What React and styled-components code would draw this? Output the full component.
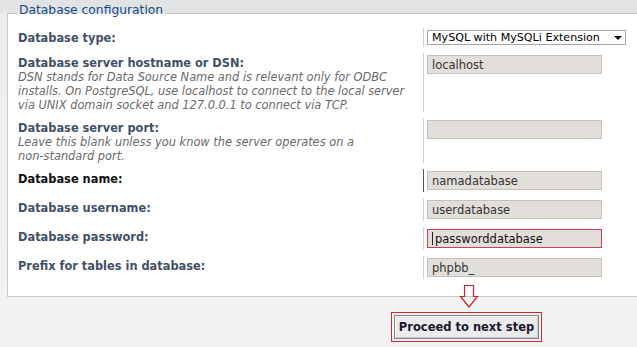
import React from "react";
import styled, { createGlobalStyle } from "styled-components";

const Global = createGlobalStyle`
  html, body { margin: 0; padding: 0; }
  body {
    font-family: "DejaVu Sans", Verdana, sans-serif;
    overflow: hidden;
    background: #f1f1f1;
  }
`;

const Page = styled.div`
  position: relative;
  width: 637px;
  height: 347px;
  overflow: hidden;
  padding: 3px 0 0 7px;
  box-sizing: border-box;
  background: linear-gradient(
    to bottom,
    #e1e3e5 0,
    #e1e3e5 13px,
    #ededed 13px,
    #f2f2f2 100%
  );
`;

const Fieldset = styled.fieldset`
  margin: 0;
  width: 690px;
  min-width: 0;
  padding: 5px 10px 17px 10px;
  border: 1px solid #c8c8c8;
  background: #ffffff;
`;

const Legend = styled.legend`
  padding: 0 2px 6px 1px;
  font-size: 12.3px;
  line-height: 14px;
  color: #144a88;
`;

const Rows = styled.div`
  display: flex;
  flex-direction: column;
  gap: 6px;
`;

const Row = styled.div`
  display: grid;
  grid-template-columns: 405px 1fr;
`;

const Term = styled.div`
  padding-top: 3px;
`;

const Label = styled.div`
  font-size: 11.4px;
  line-height: 14px;
  font-weight: bold;
  color: ${(p) => (p.$dark ? "#111111" : "#425067")};
`;

const Explain = styled.div`
  font-size: 11.4px;
  line-height: 14px;
  font-style: italic;
  color: #6a6a6a;
`;

const Field = styled.div`
  border-left: 1px solid ${(p) => (p.$dark ? "#555555" : "#cfcfcf")};
  padding: 2px 0 2px 3px;
`;

const TextInput = styled.input`
  display: block;
  box-sizing: border-box;
  width: 175px;
  height: 19px;
  margin: 0;
  padding: 0 4px 0 4px;
  border: 1px solid #c4c0ba;
  background: #e2dfda;
  font-family: "DejaVu Sans", Verdana, sans-serif;
  font-size: 11.5px;
  color: #333333;
  outline: none;
`;

const FocusBox = styled.div`
  position: relative;
  box-sizing: border-box;
  width: 175px;
  height: 19px;
  border: 1px solid #c8405f;
  background: #e2dfda;
  &::after {
    content: "";
    position: absolute;
    left: 4px;
    top: 2px;
    width: 1px;
    height: 13px;
    background: #222222;
  }
`;

const PasswordInput = styled.input`
  display: block;
  box-sizing: border-box;
  width: 100%;
  height: 17px;
  margin: 0;
  padding: 0 4px 0 7px;
  border: none;
  background: transparent;
  font-family: "DejaVu Sans", Verdana, sans-serif;
  font-size: 11.5px;
  color: #111111;
  outline: none;
`;

const SelectWrap = styled.div`
  position: relative;
  width: 199px;
  &::after {
    content: "";
    position: absolute;
    right: 4px;
    top: 6px;
    border-left: 4px solid transparent;
    border-right: 4px solid transparent;
    border-top: 4px solid #111111;
  }
`;

const Select = styled.select`
  display: block;
  appearance: none;
  -webkit-appearance: none;
  box-sizing: border-box;
  width: 199px;
  height: 15px;
  margin: 0;
  padding: 0 14px 0 4px;
  border: 1px solid #a7a7a7;
  border-radius: 0;
  background: #ffffff;
  font-family: "DejaVu Sans", Verdana, sans-serif;
  font-size: 11.1px;
  line-height: 13px;
  color: #000000;
  outline: none;
`;

const SubmitRow = styled.div`
  display: flex;
  padding: 15px 0 0 384px;
`;

const Highlight = styled.div`
  border: 1px solid #d02a32;
  padding: 2px;
`;

const Button = styled.button`
  display: block;
  box-sizing: border-box;
  width: 145px;
  height: 24px;
  margin: 0;
  padding: 0;
  border: 1px solid #858585;
  background: #ebebeb;
  box-shadow: inset 1px 1px 0 #ffffff, inset -1px -1px 0 #c9c9c9;
  font-family: "DejaVu Sans", Verdana, sans-serif;
  font-size: 11.5px;
  font-weight: bold;
  color: #1c1530;
`;

const Arrow = styled.svg`
  position: absolute;
  left: 459px;
  top: 284px;
`;

const explanations = {
  dsn: [
    "DSN stands for Data Source Name and is relevant only for ODBC",
    "installs. On PostgreSQL, use localhost to connect to the local server",
    "via UNIX domain socket and 127.0.0.1 to connect via TCP.",
  ],
  port: [
    "Leave this blank unless you know the server operates on a",
    "non-standard port.",
  ],
};

const fields = [
  { label: "Database server hostname or DSN:", explain: "dsn", value: "localhost" },
  { label: "Database server port:", explain: "port", value: "" },
  { label: "Database name:", value: "namadatabase", dark: true },
  { label: "Database username:", value: "userdatabase" },
  { label: "Database password:", value: "passworddatabase", focused: true },
  { label: "Prefix for tables in database:", value: "phpbb_" },
];

export default function App() {
  return (
    <>
      <Global />
      <Page>
        <Fieldset>
          <Legend>Database configuration</Legend>
          <Rows>
            <Row>
              <Term>
                <Label>Database type:</Label>
              </Term>
              <Field>
                <SelectWrap>
                  <Select defaultValue="mysqli">
                    <option value="mysqli">MySQL with MySQLi Extension</option>
                  </Select>
                </SelectWrap>
              </Field>
            </Row>
            {fields.map((f) => (
              <Row key={f.label}>
                <Term>
                  <Label $dark={f.dark}>{f.label}</Label>
                  {f.explain && (
                    <Explain>
                      {explanations[f.explain].map((l, i) => (
                        <div key={i}>{l}</div>
                      ))}
                    </Explain>
                  )}
                </Term>
                <Field $dark={f.dark}>
                  {f.focused ? (
                    <FocusBox>
                      <PasswordInput readOnly type="text" value={f.value} />
                    </FocusBox>
                  ) : (
                    <TextInput readOnly type="text" value={f.value} />
                  )}
                </Field>
              </Row>
            ))}
          </Rows>
        </Fieldset>
        <SubmitRow>
          <Highlight>
            <Button type="button">Proceed to next step</Button>
          </Highlight>
        </SubmitRow>
        <Arrow width="20" height="25" viewBox="0 0 20 25">
          <path
            d="M5.5 1.5 H14.5 V12.5 H18.5 L10 23 L1.5 12.5 H5.5 Z"
            fill="none"
            stroke="#c3262e"
            strokeWidth="1.2"
          />
        </Arrow>
      </Page>
    </>
  );
}
